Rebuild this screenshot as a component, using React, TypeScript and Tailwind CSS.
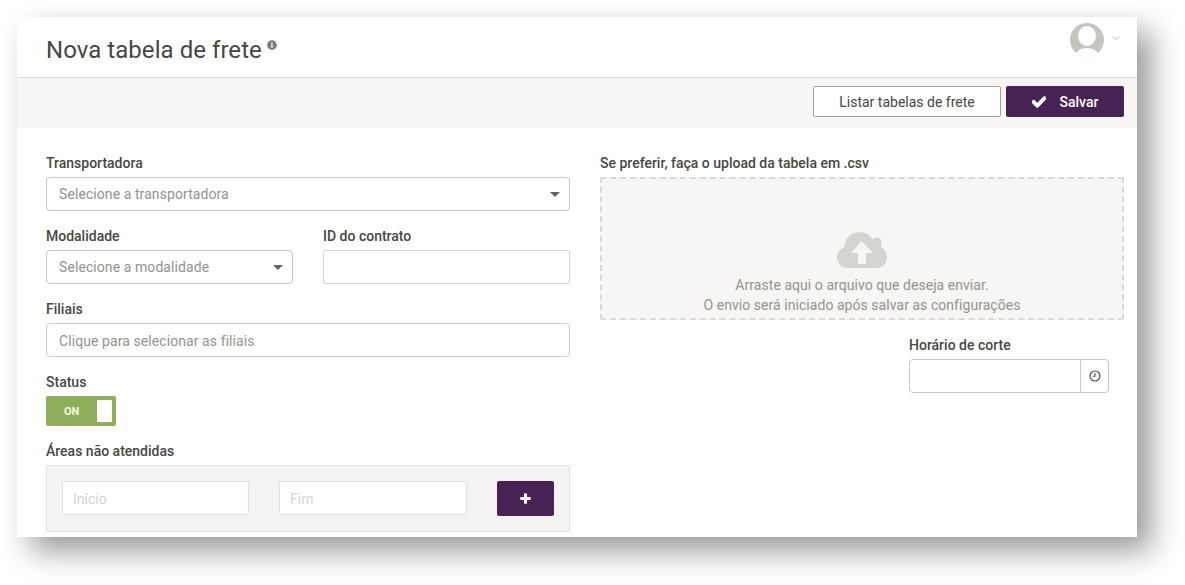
import { ChevronDown } from "lucide-react";
import { FaCheck, FaInfoCircle, FaPlus } from "react-icons/fa";

function Label({ children }: { children: React.ReactNode }) {
  return <div className="h-[14px] mb-[6px] text-[14px] leading-[13px] font-medium text-[#4a4641]">{children}</div>;
}

function SelectBox({ text }: { text: string }) {
  return (
    <div className="h-[34px] pl-3 pr-[9px] flex items-center justify-between bg-white border border-[#c8c6c1] rounded-[4px]">
      <span className="text-[14px] tracking-[0.08px] text-[#96928b]">{text}</span>
      <span className="w-0 h-0 border-x-[5px] border-x-transparent border-t-[5px] border-t-[#66635e]" />
    </div>
  );
}

function CloudIcon() {
  return (
    <svg width="50" height="36" viewBox="0 0 50 36" className="block">
      <path
        fill="#d6d4d0"
        d="M11 36C4.500 36 0 31.500 0 25.500 0 20.500 3.200 16.800 7.200 15.600 7.600 6.800 14.200 0 22.500 0c5.600 0 10.300 3 13 7.300C37 5.900 38.800 5 40.800 5.600c3 .9 4.600 3.900 3.800 7-.2.800-.5 1.500-1 2.100C47 16.800 50 20.500 50 25.500 50 31.500 45.500 36 39.500 36z"
      />
      <path fill="#f7f6f4" d="M24.500 9 36 21h-7v11h-8V21h-7z" />
    </svg>
  );
}

function ClockIcon() {
  return (
    <svg width="12" height="12" viewBox="0 0 12 12" className="block">
      <circle cx="6" cy="6" r="5" fill="none" stroke="#55524d" strokeWidth="1.2" />
      <path d="M6 3v3.200H3.600" fill="none" stroke="#55524d" strokeWidth="1.1" />
    </svg>
  );
}

function AreaInput({ placeholder, className }: { placeholder: string; className: string }) {
  return (
    <div className={`h-[34px] px-[10px] pt-[2px] flex items-center bg-white border border-[#e3e1de] rounded-[2px] text-[14px] text-[#d6d4d0] ${className}`}>
      {placeholder}
    </div>
  );
}

export default function App() {
  return (
    <div className="w-[1185px] h-[585px] p-[17px] bg-white overflow-hidden font-['Roboto',sans-serif]">
      <div className="w-[1120px] h-[520px] bg-white shadow-[14px_14px_28px_rgba(0,0,0,0.4)]">
        <header className="h-[61px] pl-[29px] pr-[15px] flex justify-between border-b border-[#dcdad6]">
          <div className="pt-[17px] flex items-start">
            <h1 className="text-[24px] leading-[32px] tracking-[0.05px] text-[#4a4641]">Nova tabela de frete</h1>
            <FaInfoCircle className="ml-[5px] mt-[6px] text-[#7f7b75]" size={10} />
          </div>
          <div className="pt-[6px] flex items-start gap-[6px]">
            <svg width="34" height="34" viewBox="0 0 34 34" className="block">
              <defs>
                <clipPath id="avatar-clip">
                  <circle cx="17" cy="17" r="17" />
                </clipPath>
              </defs>
              <g clipPath="url(#avatar-clip)">
                <rect width="34" height="34" fill="#c6c4bd" />
                <ellipse cx="17" cy="13" rx="9" ry="10" fill="#ffffff" />
                <ellipse cx="17" cy="36" rx="13" ry="11" fill="#ffffff" />
              </g>
            </svg>
            <ChevronDown className="mt-[9px] text-[#8f8d88]" size={12} strokeWidth={1.25} />
          </div>
        </header>

        <div className="h-[50px] pt-[8px] pr-[13px] flex justify-end gap-[5px] bg-[#f7f6f4]">
          <button className="w-[188px] h-[31px] pt-[1px] bg-white border border-[#a3a19c] rounded-[2px] text-[14px] text-[#4a4641]">
            Listar tabelas de frete
          </button>
          <button className="w-[118px] h-[31px] pt-[1px] flex items-center justify-center gap-[14px] bg-[#472255] rounded-[2px] text-[14px] font-medium text-white">
            <FaCheck size={14} stroke="currentColor" strokeWidth={40} />
            Salvar
          </button>
        </div>

        <main className="pl-[29px] pr-[13px] pt-[29px] flex gap-[30px]">
          <section className="w-[524px] flex flex-col">
            <Label>Transportadora</Label>
            <SelectBox text="Selecione a transportadora" />

            <div className="mt-[19px] flex gap-[30px]">
              <div className="w-[247px]">
                <Label>Modalidade</Label>
                <SelectBox text="Selecione a modalidade" />
              </div>
              <div className="w-[247px]">
                <Label>ID do contrato</Label>
                <div className="h-[34px] bg-white border border-[#d6d4d0] rounded-[2px]" />
              </div>
            </div>

            <div className="mt-[19px]">
              <Label>Filiais</Label>
              <div className="h-[34px] px-3 pt-[2px] flex items-center border border-[#c8c6c1] rounded-[4px] text-[14px] tracking-[0.08px] text-[#96928b]">
                Clique para selecionar as filiais
              </div>
            </div>

            <div className="mt-[19px]">
              <Label>Status</Label>
              <div className="w-[70px] h-[30px] pl-[18px] pr-[4px] py-[4px] flex items-center justify-between bg-[#8fae5a] rounded-[2px]">
                <span className="pt-[2px] text-[11px] font-bold text-[#f3f7e9]">ON</span>
                <span className="w-[15px] h-[22px] bg-white" />
              </div>
            </div>

            <div className="mt-[19px]">
              <Label>Áreas não atendidas</Label>
              <div className="h-[67px] px-[15px] pt-[15px] flex items-start bg-[#f4f3f1] border border-[#e3e1de] rounded-[2px]">
                <AreaInput placeholder="Início" className="w-[187px]" />
                <AreaInput placeholder="Fim" className="w-[188px] ml-[30px]" />
                <button className="w-[57px] h-[35px] ml-[30px] flex items-center justify-center bg-[#472255] rounded-[2px] text-white">
                  <FaPlus size={11} stroke="currentColor" strokeWidth={50} />
                </button>
              </div>
            </div>
          </section>

          <section className="w-[524px]">
            <Label>Se preferir, faça o upload da tabela em .csv</Label>
            <div className="h-[143px] pt-[53px] flex flex-col items-center bg-[#f7f6f4] border-2 border-dashed border-[#dbd9d5] rounded-[2px]">
              <CloudIcon />
              <p className="mt-[7px] text-[14px] leading-[20px] tracking-[0.05px] text-center text-[#96928b]">
                Arraste aqui o arquivo que deseja enviar.
                <br />
                O envio será iniciado após salvar as configurações
              </p>
            </div>
            <div className="mt-[19px] ml-[309px] w-[200px]">
              <Label>Horário de corte</Label>
              <div className="h-[34px] flex border border-[#c8c6c1] rounded-[4px]">
                <div className="flex-1" />
                <div className="w-[28px] flex items-center justify-center border-l border-[#c8c6c1]">
                  <ClockIcon />
                </div>
              </div>
            </div>
          </section>
        </main>
      </div>
    </div>
  );
}
